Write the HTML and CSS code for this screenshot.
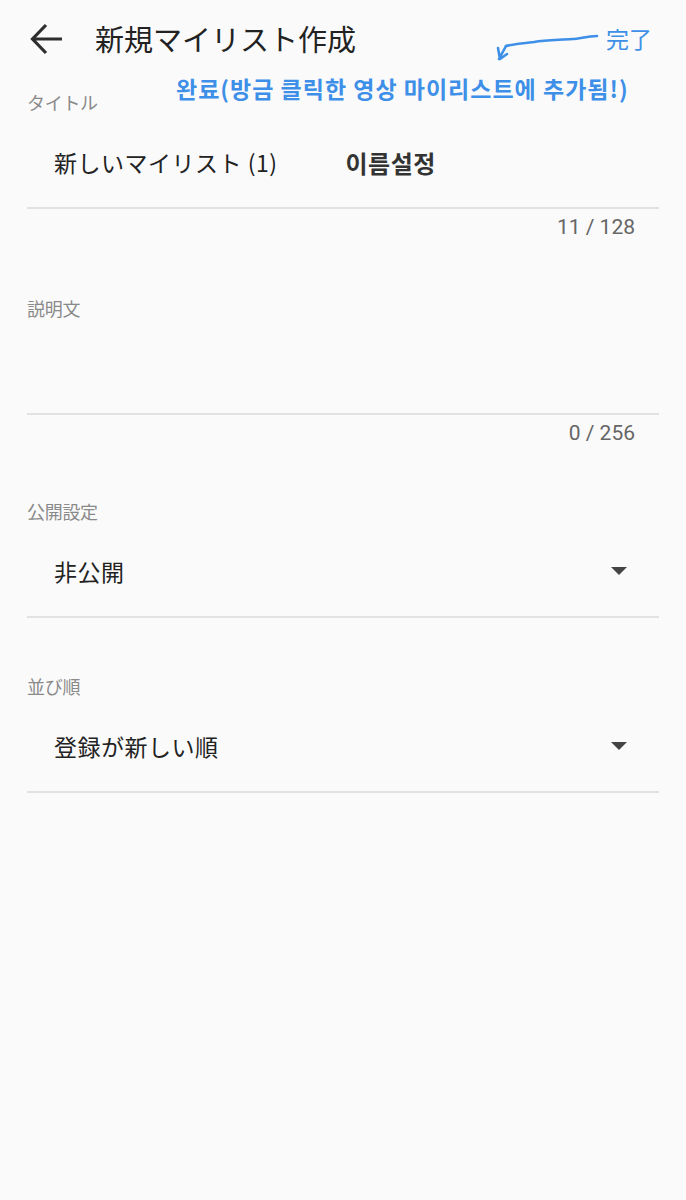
FILE: index.html
```html
<!DOCTYPE html>
<html lang="ja">
<head>
<meta charset="utf-8">
<link rel="stylesheet" href="styles.css">
</head>
<body>
<div class="screen">
  <header class="appbar">
    <svg class="back" width="36" height="36" viewBox="0 0 36 36">
      <path d="M33 18 H4 M17 4 L3.5 18 L17 32" fill="none" stroke="#2e2e2e" stroke-width="3.2" stroke-linecap="butt" stroke-linejoin="miter"/>
    </svg>
    <h1 class="title">新規マイリスト作成</h1>
    <span class="done">完了</span>
  </header>

  <svg class="note-arrow" width="120" height="36" viewBox="0 0 120 36">
    <path d="M103 6 C92 6 86 9 78 9 C66 10 52 10 40 12 C30 13 20 14 12 16" fill="none" stroke="#3d8fe8" stroke-width="2.6" stroke-linecap="round"/>
    <path d="M12 16 L5 29 M4 18 L6 29 L13 24" fill="none" stroke="#3d8fe8" stroke-width="2.6" stroke-linecap="round" stroke-linejoin="round"/>
  </svg>
  <div class="note">완료(방금 클릭한 영상 마이리스트에 추가됨!)</div>

  <main class="form">
    <section class="field first">
      <div class="label">タイトル</div>
      <div class="row">
        <span class="value">新しいマイリスト (1)</span>
        <span class="kr">이름설정</span>
      </div>
      <div class="counter">11 / 128</div>
    </section>

    <section class="field">
      <div class="label">説明文</div>
      <div class="row"></div>
      <div class="counter">0 / 256</div>
    </section>

    <section class="field select">
      <div class="label">公開設定</div>
      <div class="row">
        <span class="value">非公開</span>
        <span class="caret"></span>
      </div>
    </section>

    <section class="field select">
      <div class="label">並び順</div>
      <div class="row">
        <span class="value">登録が新しい順</span>
        <span class="caret"></span>
      </div>
    </section>
  </main>
</div>
</body>
</html>
```

FILE: styles.css
```css
html, body {
  margin: 0;
  padding: 0;
  background: #fafafa;
}

body {
  font-family: "Noto Sans CJK JP", "Noto Sans", Roboto, sans-serif;
  color: #222;
}

.screen {
  position: relative;
  width: 686px;
  height: 1200px;
  background: #fafafa;
}

.appbar {
  display: flex;
  align-items: center;
  height: 76px;
  padding: 0 34px 0 29px;
}

.back {
  display: block;
  flex: none;
  margin-top: 2px;
}

.title {
  margin: 0 0 0 30px;
  font-size: 29px;
  font-weight: 400;
  color: #222;
  letter-spacing: 0;
  flex: 1;
}

.done {
  font-size: 23px;
  color: #3d8fe8;
}

.note-arrow {
  position: absolute;
  left: 494px;
  top: 30px;
}

.note {
  position: absolute;
  left: 176px;
  top: 71px;
  font-family: "Noto Sans CJK KR", "Noto Sans", sans-serif;
  font-weight: 700;
  font-size: 23px;
  line-height: 34px;
  color: #3d8fe8;
  letter-spacing: 1px;
  white-space: nowrap;
}

.form {
  padding: 0 27px;
}

.field {
  margin-top: 57px;
}

.field.first {
  margin-top: 14px;
}

.field.select {
  margin-top: 54px;
}

.field.select + .field.select {
  margin-top: 56px;
}

.label {
  font-size: 18px;
  line-height: 24px;
  color: #8a8a8a;
  letter-spacing: -0.3px;
}

.row {
  display: flex;
  align-items: center;
  height: 90px;
  padding: 3px 0 0 27px;
  border-bottom: 2px solid #e2e2e2;
}

.value {
  font-size: 23px;
  color: #222;
  letter-spacing: 0.5px;
}

.kr {
  margin-left: 68px;
  font-family: "Noto Sans CJK KR", "Noto Sans", sans-serif;
  font-weight: 700;
  font-size: 24px;
  color: #333;
  letter-spacing: 0.5px;
}

.caret {
  margin-left: auto;
  margin-right: 32px;
  width: 0;
  height: 0;
  border-left: 8px solid transparent;
  border-right: 8px solid transparent;
  border-top: 8px solid #444;
}

.counter {
  margin-top: 6px;
  padding-right: 24px;
  text-align: right;
  font-family: Roboto, "Noto Sans", sans-serif;
  font-size: 21px;
  line-height: 24px;
  color: #666;
}
```
